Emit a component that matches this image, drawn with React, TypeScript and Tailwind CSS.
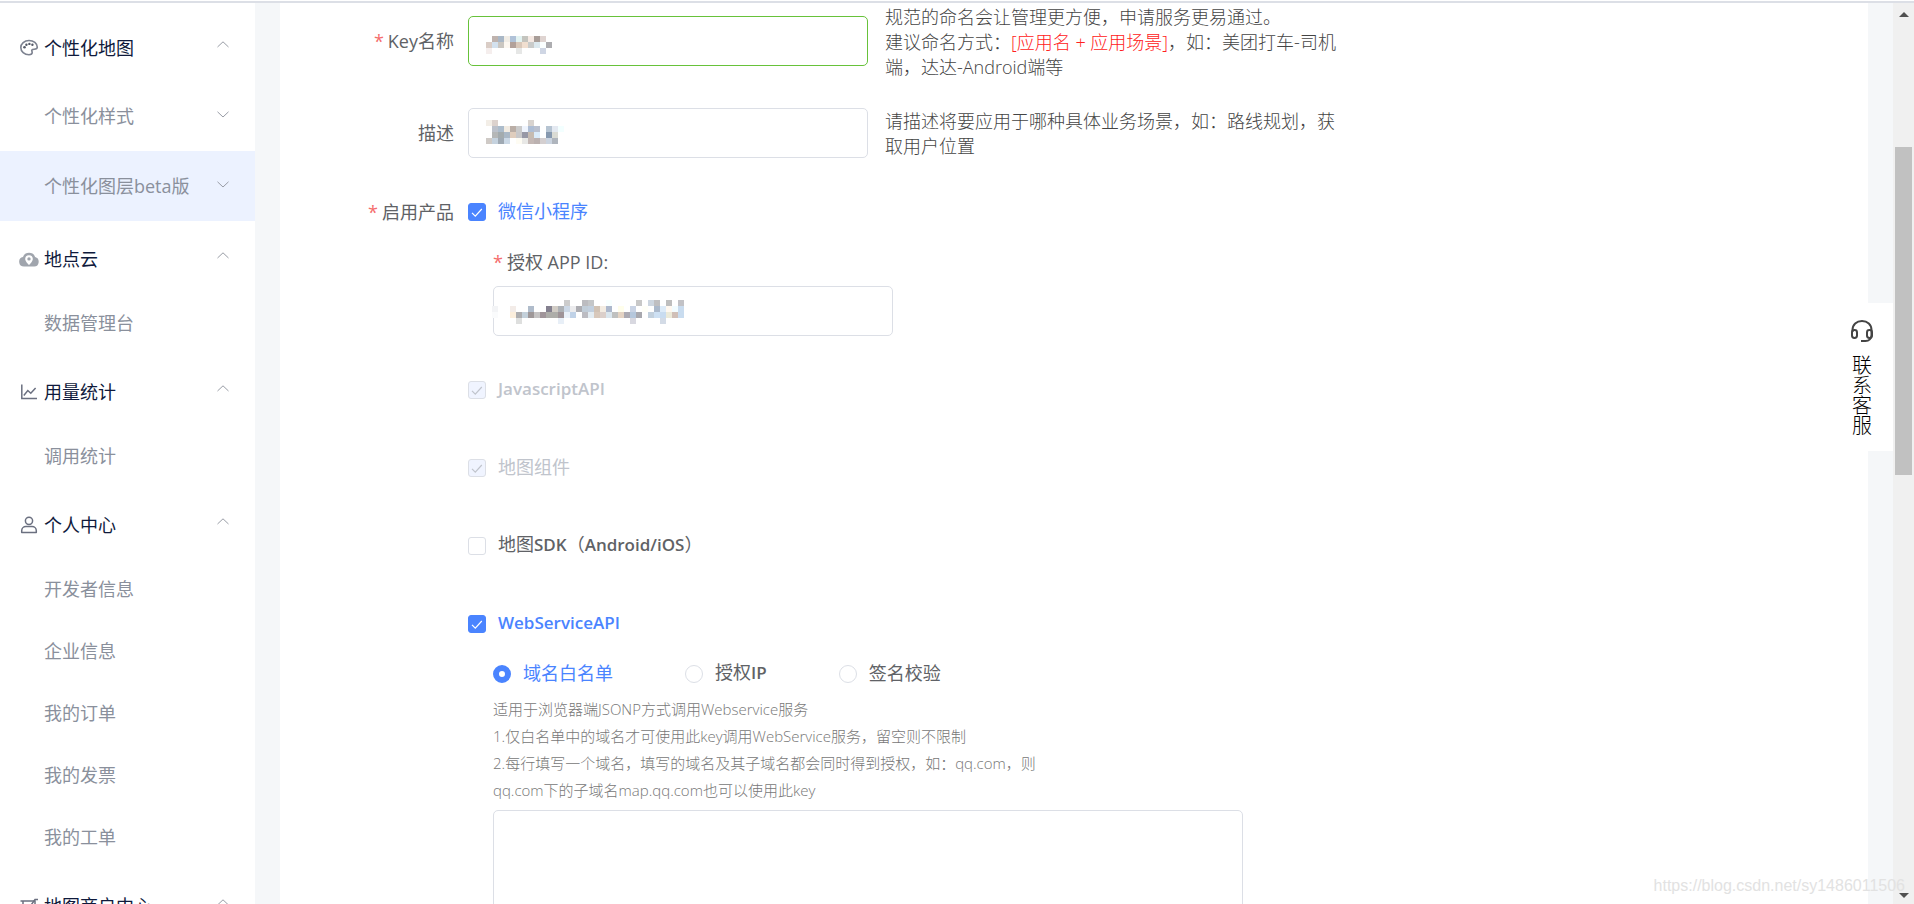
import React from "react";
import { clsx } from "clsx";

type Cell = [number, string];

const KEY_MASK: Cell[][] = [
  [[1, "#bfb3ae"], [2, "#a9b7c6"], [3, "#f1ede6"], [4, "#b0c2d8"], [5, "#e3f3f2"], [6, "#c4c4be"], [7, "#f5e9e3"], [8, "#a89d98"], [9, "#dfd4d1"]],
  [[0, "#dacdc6"], [1, "#d3e1ee"], [2, "#cac6c0"], [3, "#fcf7f0"], [4, "#b2a19a"], [5, "#d9c8ba"], [6, "#f1dfd0"], [7, "#c9cbca"], [8, "#dce9ef"], [9, "#fbffff"], [10, "#adadb0"]],
  [[0, "#f5eeed"], [5, "#e6e7e6"], [9, "#cfd6e4"]],
];

const DESC_MASK: Cell[][] = [
  [[0, "#f3eee7"], [1, "#dcd2cd"], [7, "#d8d3cf"]],
  [[1, "#bcc1ca"], [2, "#acbccb"], [3, "#f1ebe2"], [4, "#baaea6"], [5, "#cacaca"], [6, "#eff4fd"], [7, "#adbdd4"], [8, "#b9c0cf"], [10, "#b6c4d2"], [11, "#e4e9f1"], [12, "#f3ffff"]],
  [[1, "#b5b7b7"], [2, "#a3abae"], [3, "#aab8c6"], [4, "#dfcdbd"], [5, "#c8c8ca"], [6, "#9798a6"], [7, "#c6bbb1"], [8, "#daebfa"], [10, "#8799af"], [11, "#dadbd4"]],
  [[0, "#cfcac6"], [1, "#c5d2de"], [2, "#9fa9b3"], [3, "#ccd9e6"], [5, "#fefcf3"], [6, "#e8e8e6"], [7, "#c4b8b5"], [8, "#bbb1b0"], [9, "#d4cfd0"], [10, "#cbd4e0"], [11, "#afb5bd"]],
];

const APP_MASK: Cell[][] = [
  [[9, "#cccccc"], [12, "#bcbcc0"], [13, "#c4c6c8"], [16, "#f8ffff"], [21, "#c8c8c8"], [23, "#cdd6e0"], [24, "#bfbfc1"], [26, "#bebebe"], [28, "#c2c2c6"]],
  [[-3, "#f3f4f6"], [0, "#f3ece8"], [3, "#b0bccb"], [6, "#84808f"], [7, "#d1ccc5"], [8, "#adb1b5"], [9, "#ccd8e6"], [10, "#ececee"], [11, "#adadb2"], [12, "#c1cdd8"], [13, "#c2cfde"], [14, "#d1c2b4"], [15, "#f3ece2"], [16, "#adb8cc"], [18, "#fffeeb"], [20, "#c9d3e4"], [22, "#fffff8"], [24, "#abb9cb"], [25, "#ddebf8"], [26, "#fff8f0"], [27, "#f2fcff"], [28, "#c9dcef"]],
  [[-3, "#fafbfc"], [0, "#fbeedc"], [1, "#adadaf"], [2, "#c3d0da"], [3, "#9e9798"], [4, "#c5c3c3"], [5, "#a0959a"], [6, "#adada9"], [7, "#adada9"], [8, "#9e9397"], [9, "#e9f0f8"], [10, "#c0d2e7"], [12, "#bcbcc2"], [13, "#e3ecf2"], [14, "#d8c8bb"], [15, "#dbcfca"], [16, "#dae6ee"], [17, "#bfc0bf"], [18, "#e4d3c3"], [19, "#acaab2"], [20, "#b5c7dc"], [21, "#a8a8ae"], [23, "#c2d0dd"], [24, "#cde0f3"], [25, "#c9dcf0"], [26, "#ecead9"], [27, "#d0bfb7"], [28, "#c9dcef"]],
  [[1, "#dedfde"], [8, "#e8eff7"], [20, "#d8d8e0"], [25, "#d3dbe6"]],
];

const Mosaic: React.FC<{ rows: Cell[][]; className: string }> = ({ rows, className }) => (
  <svg
    width="180"
    height="24"
    viewBox="0 0 180 24"
    shapeRendering="crispEdges"
    className={clsx("pointer-events-none absolute overflow-visible", className)}
    aria-hidden="true"
  >
    {rows.map((row, y) =>
      row.map(([x, fill]) => <rect key={`${x}-${y}`} x={x * 6} y={y * 6} width="6" height="6" fill={fill} />)
    )}
  </svg>
);

const PaletteIcon = () => (
  <svg width="20" height="18" viewBox="0 0 20 18" fill="none" stroke="#7d8290" strokeWidth="1.6">
    <path d="M10 1.500C5.400 1.500 1.800 4.600 1.800 8.500c0 4.100 3.600 7.300 8.200 7.300 2 0 3.200-1 3.200-2.200 0-1.500-.9-1.800-.3-2.700 1-1.300 5.400.2 5.400-2.700C18.300 4.300 14.600 1.500 10 1.500z" />
    <g fill="#555a68" stroke="none">
      <circle cx="5.500" cy="8.300" r="1.300" />
      <circle cx="7.400" cy="5.700" r="1.200" />
      <circle cx="10.400" cy="4.900" r="1.200" />
      <circle cx="13.400" cy="5.700" r="1.200" />
    </g>
  </svg>
);

const CloudIcon = () => (
  <svg width="20" height="18" viewBox="0 0 20 18">
    <path fill="#a0a5ad" d="M5 16.600a4.800 4.800 0 0 1-1-9.500A6.400 6.400 0 0 1 16.100 7a4.900 4.900 0 0 1-.9 9.600z" />
    <path fill="#fff" d="M10 5.200a3.800 3.800 0 0 0-3.800 3.800c0 2.500 3.800 6 3.800 6s3.800-3.500 3.800-6A3.800 3.800 0 0 0 10 5.200z" />
    <circle cx="10" cy="8.900" r="1.700" fill="#a0a5ad" />
  </svg>
);

const ChartIcon = () => (
  <svg width="20" height="18" viewBox="0 0 20 18" fill="none" stroke="#6b7080" strokeWidth="1.500">
    <path d="M2.800 1.500v14H18" />
    <path d="M4.800 12.500l4-5 3 2.800L16.600 5" />
  </svg>
);

const UserIcon = () => (
  <svg width="20" height="18" viewBox="0 0 20 18" fill="none" stroke="#6b7080" strokeWidth="1.500">
    <circle cx="10" cy="4.800" r="3.600" />
    <path d="M2.700 16.600v-1.800c0-2.500 1.900-4.200 4.200-4.200h6.200c2.300 0 4.200 1.700 4.200 4.200v1.800z" strokeLinejoin="round" />
  </svg>
);

const ShopIcon = () => (
  <svg width="20" height="18" viewBox="0 0 20 18" fill="none" stroke="#6b7080" strokeWidth="1.500">
    <path d="M1.500 4H16v12.500H4V4" />
    <path d="M10 11l6-8.500h3" />
  </svg>
);

const Arrow: React.FC<{ up?: boolean }> = ({ up }) => (
  <svg width="12" height="7" viewBox="0 0 12 7" fill="none" stroke="#989ca5" className="mb-[3px] shrink-0">
    <path d={up ? "M.500 6L6 .800 11.500 6" : "M.500 .800L6 6 11.500 .800"} />
  </svg>
);

interface MenuGroup {
  title: string;
  icon: React.ReactElement;
  items: string[];
}

const groups: MenuGroup[] = [
  { title: "地点云", icon: <CloudIcon />, items: ["数据管理台"] },
  { title: "用量统计", icon: <ChartIcon />, items: ["调用统计"] },
  { title: "个人中心", icon: <UserIcon />, items: ["开发者信息", "企业信息", "我的订单", "我的发票", "我的工单"] },
  { title: "地图商户中心", icon: <ShopIcon />, items: [] },
];

const GroupTitle: React.FC<{ title: string; icon: React.ReactElement }> = ({ title, icon }) => (
  <button type="button" className="flex h-[71px] w-full items-center pr-[26px] pl-[19px] text-left text-[#0f1a3c]">
    <span className="flex w-[25px] shrink-0 pt-1">{icon}</span>
    <span className="flex-1 pt-1">{title}</span>
    <Arrow up />
  </button>
);

const Sidebar = () => (
  <nav className="w-[255px] shrink-0 overflow-hidden bg-white pt-[7px]">
    <GroupTitle title="个性化地图" icon={<PaletteIcon />} />
    <a href="#style" className="flex h-[70px] items-center justify-between pr-[26px] pl-[44px] text-[#8a909c]">
      个性化样式
      <Arrow />
    </a>
    <a href="#layer" className="flex h-[70px] items-center justify-between bg-[#ecf2ff] pr-[26px] pl-[44px] text-[#8a909c]">
      个性化图层beta版
      <Arrow />
    </a>
    {groups.map((group) => (
      <div key={group.title}>
        <GroupTitle title={group.title} icon={group.icon} />
        {group.items.map((item) => (
          <a key={item} href="#menu" className="flex h-[62px] items-center pl-[44px] text-[#8a909c]">
            {item}
          </a>
        ))}
      </div>
    ))}
  </nav>
);

const Star = () => <span className="mr-1 text-[#f56c6c]">*</span>;

const Bold: React.FC<{ children: React.ReactNode }> = ({ children }) => (
  <span className="text-[17px] font-semibold">{children}</span>
);

interface ProductCheckProps {
  id: string;
  checked?: boolean;
  disabled?: boolean;
  children: React.ReactNode;
}

const ProductCheck: React.FC<ProductCheckProps> = ({ id, checked, disabled, children }) => (
  <div className="flex h-9 items-center">
    <span className="relative flex">
      <input
        id={id}
        type="checkbox"
        defaultChecked={checked}
        disabled={disabled}
        className="peer size-[18px] appearance-none rounded-[3px] border border-[#dcdfe6] bg-white checked:border-[#4a84ff] checked:bg-[#4a84ff] disabled:border-[#dcdfe6] disabled:bg-[#f0f4ff]"
      />
      <svg
        viewBox="0 0 18 18"
        fill="none"
        strokeWidth="1.200"
        className="pointer-events-none absolute inset-0 hidden stroke-white peer-checked:block peer-disabled:stroke-[#c0c4cc]"
      >
        <path d="M4 9.800l3.300 3.400L13.800 6" />
      </svg>
    </span>
    <label
      htmlFor={id}
      className={clsx("pb-[3px] pl-3", disabled ? "text-[#c0c4cc]" : checked ? "text-[#4a84ff]" : "text-[#606266]")}
    >
      {children}
    </label>
  </div>
);

const AuthRadio: React.FC<{ id: string; checked?: boolean; children: React.ReactNode }> = ({ id, checked, children }) => (
  <div className="flex items-center">
    <input
      id={id}
      name="auth"
      type="radio"
      defaultChecked={checked}
      className="size-[18px] appearance-none rounded-full border border-[#dcdfe6] bg-white checked:border-[6px] checked:border-[#4a84ff]"
    />
    <label htmlFor={id} className={clsx("pb-[3px] pl-3", checked ? "text-[#4a84ff]" : "text-[#606266]")}>
      {children}
    </label>
  </div>
);

const KeyForm = () => (
  <form className="pt-[13px] text-[#606266]">
    <div className="flex h-[50px] items-center">
      <label htmlFor="key-name" className="w-[174px] shrink-0 text-right">
        <Star />
        Key名称
      </label>
      <div className="relative ml-[14px] w-[400px] shrink-0">
        <input id="key-name" type="text" className="h-[50px] w-full rounded-[5px] border border-[#67c23a] px-4 outline-none" />
        <Mosaic rows={KEY_MASK} className="top-5 left-[18px]" />
      </div>
      <p className="ml-[17px] w-[480px] pt-[2px] leading-[25px] font-light text-[#444]">
        规范的命名会让管理更方便，申请服务更易通过。
        <br />
        建议命名方式：<span className="text-[#ff2020]">[应用名 + 应用场景]</span>，如：美团打车-司机
        <br />
        端，达达-Android端等
      </p>
    </div>

    <div className="mt-[42px] flex h-[50px] items-center">
      <label htmlFor="key-desc" className="w-[174px] shrink-0 text-right">
        描述
      </label>
      <div className="relative ml-[14px] w-[400px] shrink-0">
        <input id="key-desc" type="text" className="h-[50px] w-full rounded-[5px] border border-[#dcdfe6] px-4 outline-none" />
        <Mosaic rows={DESC_MASK} className="top-3 left-[18px]" />
      </div>
      <p className="ml-[17px] w-[480px] pt-[2px] leading-[25px] font-light text-[#444]">
        请描述将要应用于哪种具体业务场景，如：路线规划，获
        <br />
        取用户位置
      </p>
    </div>

    <div className="mt-9 flex">
      <div className="w-[174px] shrink-0 text-right leading-9">
        <Star />
        启用产品
      </div>
      <div className="ml-[14px] w-[775px]">
        <ProductCheck id="wx" checked>
          微信小程序
        </ProductCheck>
        <div className="mt-[14px] pl-[25px]">
          <label htmlFor="app-id" className="block leading-9">
            <Star />
            授权 APP ID:
          </label>
          <div className="relative mt-[6px] w-[400px]">
            <input id="app-id" type="text" className="h-[50px] w-full rounded-[5px] border border-[#dcdfe6] px-4 outline-none" />
            <Mosaic rows={APP_MASK} className="top-[14px] left-[17px]" />
          </div>
        </div>

        <div className="mt-9 flex flex-col gap-[42px]">
          <ProductCheck id="js" checked disabled>
            <Bold>JavascriptAPI</Bold>
          </ProductCheck>
          <ProductCheck id="widget" checked disabled>
            地图组件
          </ProductCheck>
          <ProductCheck id="sdk">
            地图<Bold>SDK</Bold>（<Bold>Android/iOS</Bold>）
          </ProductCheck>
          <ProductCheck id="ws" checked>
            <Bold>WebServiceAPI</Bold>
          </ProductCheck>
        </div>

        <div className="pl-[25px]">
          <div className="mt-[14px] flex h-9 gap-[72px]">
            <AuthRadio id="domain" checked>
              域名白名单
            </AuthRadio>
            <AuthRadio id="ip">
              授权<Bold>IP</Bold>
            </AuthRadio>
            <AuthRadio id="sign">签名校验</AuthRadio>
          </div>
          <label htmlFor="whitelist" className="mt-1 block text-[15px] leading-[27px] font-light text-[#777]">
            适用于浏览器端JSONP方式调用Webservice服务
            <br />
            1.仅白名单中的域名才可使用此key调用WebService服务，留空则不限制
            <br />
            2.每行填写一个域名，填写的域名及其子域名都会同时得到授权，如：qq.com，则
            <br />
            qq.com下的子域名map.qq.com也可以使用此key
          </label>
          <textarea
            id="whitelist"
            rows={6}
            className="mt-[6px] block w-full resize-none rounded-[5px] border border-[#dcdfe6] px-4 py-2 outline-none"
          />
        </div>
      </div>
    </div>
  </form>
);

const ContactTab = () => (
  <button
    type="button"
    className="absolute top-[303px] right-[21px] flex h-[148px] w-[62px] flex-col items-center bg-white pt-4 text-xl leading-[20px] text-black"
  >
    <svg width="24" height="24" viewBox="0 0 24 24" fill="none" stroke="#444" strokeWidth="2">
      <path d="M2.500 13v-2C2.500 5.500 6.500 2 12 2s9.500 3.500 9.500 9v5c0 3.500-2.500 6-6 6H11" />
      <rect x="2" y="11" width="5" height="8" rx="2.400" />
      <rect x="17" y="11" width="5" height="8" rx="2.400" />
    </svg>
    <span className="mt-[13px] w-5 font-light break-all">联系客服</span>
  </button>
);

const ScrollTrack = () => (
  <div className="flex w-[21px] shrink-0 flex-col items-center bg-[#f0f0f0]" aria-hidden="true">
    <svg width="10" height="5" viewBox="0 0 10 5" className="mt-[9px]">
      <path d="M0 5l5-5 5 5z" fill="#505050" />
    </svg>
    <div className="mt-[130px] h-[328px] w-[17px] bg-[#c1c1c1]" />
    <svg width="10" height="5" viewBox="0 0 10 5" className="mt-auto mb-[6px]">
      <path d="M0 0l5 5 5-5z" fill="#505050" />
    </svg>
  </div>
);

const App = () => (
  <div className="relative flex h-screen flex-col overflow-hidden bg-white pt-px font-['Open_Sans','Noto_Sans_CJK_SC',sans-serif] text-lg font-normal">
    <div className="h-[2px] shrink-0 bg-[#dcdfe6]" />
    <div className="flex min-h-0 flex-1 bg-[#f5f7f9]">
      <Sidebar />
      <main className="mx-[25px] min-w-0 flex-1 overflow-hidden bg-white">
        <KeyForm />
      </main>
      <ScrollTrack />
    </div>
    <ContactTab />
    <p className="pointer-events-none absolute right-[9px] bottom-[6px] font-['Liberation_Sans',sans-serif] text-base text-[#e2e2e2]">
      https://blog.csdn.net/sy1486011506
    </p>
  </div>
);

export default App;
